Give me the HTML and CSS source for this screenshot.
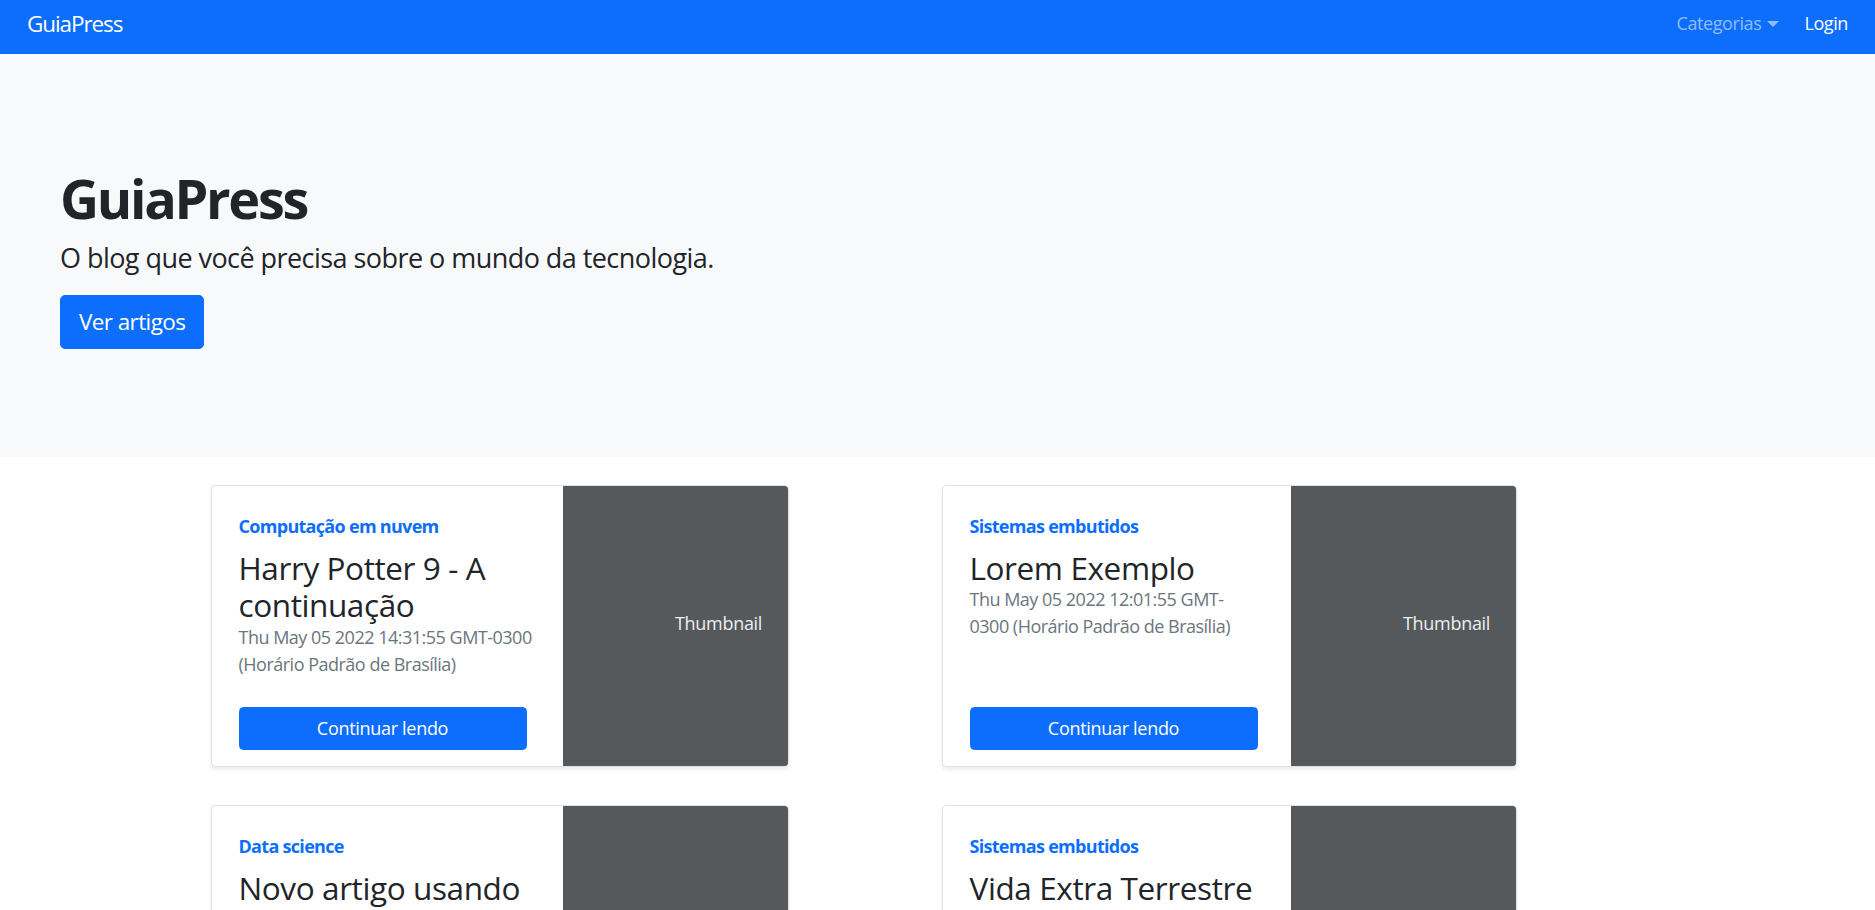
FILE: index.html
```html
<!DOCTYPE html>
<html lang="pt-BR">
<head>
<meta charset="utf-8">
<title>GuiaPress</title>
<link rel="stylesheet" href="styles.css">
</head>
<body>
<nav class="navbar">
  <a class="brand" href="#">GuiaPress</a>
  <div class="nav-links">
    <a class="nav-link dropdown" href="#">Categorias<span class="caret"></span></a>
    <a class="nav-link active" href="#">Login</a>
  </div>
</nav>

<section class="hero">
  <h1 class="hero-title">GuiaPress</h1>
  <p class="lead">O blog que você precisa sobre o mundo da tecnologia.</p>
  <a class="btn-lg" href="#">Ver artigos</a>
</section>

<main class="posts">
  <article class="card">
    <div class="card-body">
      <strong class="cat">Computação em nuvem</strong>
      <h3 class="card-title">Harry Potter 9 - A continuação</h3>
      <div class="date">Thu May 05 2022 14:31:55 GMT-0300 (Horário Padrão de Brasília)</div>
      <a class="btn" href="#">Continuar lendo</a>
    </div>
    <div class="thumb">Thumbnail</div>
  </article>

  <article class="card">
    <div class="card-body">
      <strong class="cat">Sistemas embutidos</strong>
      <h3 class="card-title">Lorem Exemplo</h3>
      <div class="date">Thu May 05 2022 12:01:55 GMT-<br>0300 (Horário Padrão de Brasília)</div>
      <a class="btn" href="#">Continuar lendo</a>
    </div>
    <div class="thumb">Thumbnail</div>
  </article>

  <article class="card">
    <div class="card-body">
      <strong class="cat">Data science</strong>
      <h3 class="card-title">Novo artigo usando Markdown</h3>
      <div class="date">Wed May 04 2022 18:22:10 GMT-0300 (Horário Padrão de Brasília)</div>
      <a class="btn" href="#">Continuar lendo</a>
    </div>
    <div class="thumb">Thumbnail</div>
  </article>

  <article class="card">
    <div class="card-body">
      <strong class="cat">Sistemas embutidos</strong>
      <h3 class="card-title">Vida Extra Terrestre</h3>
      <div class="date">Wed May 04 2022 10:05:41 GMT-0300 (Horário Padrão de Brasília)</div>
      <a class="btn" href="#">Continuar lendo</a>
    </div>
    <div class="thumb">Thumbnail</div>
  </article>
</main>
</body>
</html>
```

FILE: styles.css
```css
* {
  box-sizing: border-box;
}

html,
body {
  margin: 0;
  padding: 0;
}

body {
  font-family: "Open Sans", "Noto Sans", sans-serif;
  font-size: 18px;
  line-height: 1.5;
  color: #212529;
  background: #fff;
  overflow: hidden;
}

a {
  text-decoration: none;
}

/* Navbar */
.navbar {
  height: 54px;
  background: #0d6efd;
  display: flex;
  align-items: center;
  justify-content: space-between;
  padding: 0 27px 7px 27px;
}

.brand {
  color: #fff;
  font-size: 22.5px;
  line-height: 1.5;
  letter-spacing: -1.1px;
}

.nav-links {
  display: flex;
  align-items: center;
  gap: 25px;
}

.nav-link {
  font-size: 18px;
  line-height: 27px;
  color: rgba(255, 255, 255, 0.55);
  display: flex;
  align-items: center;
  letter-spacing: -0.4px;
}

.nav-link.active {
  color: #fff;
}

.caret {
  display: inline-block;
  margin-left: 6px;
  width: 0;
  height: 0;
  border-top: 6px solid rgba(255, 255, 255, 0.55);
  border-left: 6px solid transparent;
  border-right: 6px solid transparent;
  margin-top: 1px;
}

/* Hero */
.hero {
  background: #f8f9fa;
  padding: 112px 60px 108px;
}

.hero-title {
  font-size: 54px;
  font-weight: 700;
  line-height: 1.2;
  letter-spacing: -2.3px;
  margin: 0 0 7px;
}

.lead {
  font-size: 27px;
  font-weight: 400;
  line-height: 1.5;
  letter-spacing: -0.55px;
  margin: 0 0 17px;
}

.btn-lg {
  display: inline-block;
  background: #0d6efd;
  color: #fff;
  border: 1px solid #0d6efd;
  border-radius: 5px;
  font-size: 22.5px;
  line-height: 1.5;
  letter-spacing: -0.6px;
  padding: 9px 18px;
}

/* Posts */
.posts {
  display: grid;
  grid-template-columns: 578px 575px;
  column-gap: 153px;
  row-gap: 38px;
  padding: 27.5px 0 40px 210.5px;
}

.card {
  display: flex;
  height: 282px;
  border: 1px solid #dee2e6;
  border-radius: 4.5px;
  overflow: hidden;
  background: #fff;
  box-shadow: 0 2.25px 4.5px rgba(0, 0, 0, 0.075);
}

.card-body {
  flex: 1;
  min-width: 0;
  display: flex;
  flex-direction: column;
  align-items: flex-start;
  padding: 27px 27px 16px;
}

.cat {
  display: block;
  color: #0d6efd;
  font-weight: 700;
  font-size: 18px;
  line-height: 27px;
  letter-spacing: -0.7px;
  margin-bottom: 9px;
}

.card-title {
  font-size: 31.5px;
  font-weight: 500;
  line-height: 1.2;
  letter-spacing: -0.4px;
  margin: 0;
}

.date {
  color: #6c757d;
  font-size: 18px;
  line-height: 27px;
  letter-spacing: -0.5px;
  margin-bottom: 4.5px;
}

.btn {
  margin-top: auto;
  display: block;
  width: 288px;
  text-align: center;
  background: #0d6efd;
  border: 1px solid #0d6efd;
  color: #fff;
  border-radius: 4.5px;
  font-size: 18px;
  line-height: 27px;
  letter-spacing: -0.3px;
  padding: 6.75px 13.5px;
}

.thumb {
  flex: 0 0 225px;
  background: #55595c;
  color: #eceeef;
  font-size: 18px;
  line-height: 27px;
  letter-spacing: -0.3px;
  display: flex;
  align-items: center;
  padding: 0 0 4px 112.5px;
  white-space: nowrap;
}
```
